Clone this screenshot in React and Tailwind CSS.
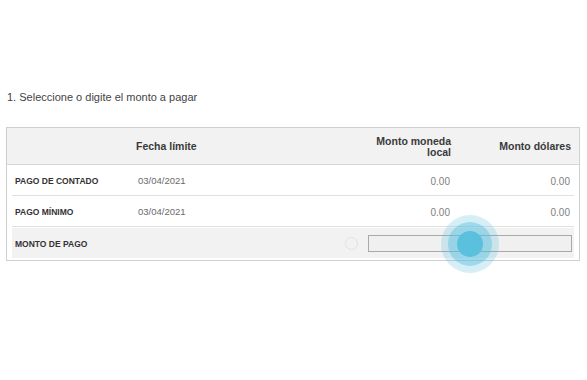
export default function App() {
  const rows = [
    { label: "PAGO DE CONTADO", date: "03/04/2021", local: "0.00", usd: "0.00" },
    { label: "PAGO MÍNIMO", date: "03/04/2021", local: "0.00", usd: "0.00" },
  ];
  return (
    <div className="w-[587px] h-[380px] bg-white font-['Liberation_Sans',Arial,sans-serif] text-[#333] relative">
      <div className="pt-[89px] pl-[7px] text-[11px] leading-[16px] text-[#444]">
        1. Seleccione o digite el monto a pagar
      </div>
      <div className="mt-[22px] ml-[6px] w-[574px] border border-[#cfcfcf]">
        <div className="flex items-center h-[37px] pt-[1px] bg-[#f2f2f2] border-b border-[#d6d6d6] text-[10.5px] font-bold text-[#3a3a3a] leading-[11px]">
          <div className="w-[129px]" />
          <div className="flex-1">Fecha límite</div>
          <div className="w-[150px] pr-[4px] text-right">
            Monto moneda
            <br />
            local
          </div>
          <div className="w-[124px] pr-[8px] text-right">Monto dólares</div>
        </div>
        <div className="px-[5px] pb-[2px]">
          {rows.map((r) => (
            <div
              key={r.label}
              className="flex items-center h-[31px] pt-[3px] border-b border-[#e0e0e0]"
            >
              <div className="w-[126px] pl-[3px] text-[8.5px] font-bold text-[#333]">
                {r.label}
              </div>
              <div className="flex-1 text-[9.5px] text-[#6a6a6a]">{r.date}</div>
              <div className="w-[150px] pr-[4px] text-right text-[10px] text-[#808080]">
                {r.local}
              </div>
              <div className="w-[120px] pr-[4px] text-right text-[10px] text-[#808080]">
                {r.usd}
              </div>
            </div>
          ))}
          <div className="flex items-center h-[30px] mt-[1px] pt-[1px] bg-[#f2f2f2]">
            <div className="flex-1 pl-[3px] pt-[2px] text-[8.5px] font-bold text-[#333]">
              MONTO DE PAGO
            </div>
            <div className="w-[13px] h-[13px] rounded-full border border-[#e2e2e2] mr-[10px]" />
            <div className="w-[204px] h-[17px] border border-[#a9a9a9] bg-[#f0f0f0] mr-[2px]" />
          </div>
        </div>
      </div>
      <div className="absolute left-[441px] top-[215px] w-[58px] h-[58px] rounded-full bg-[#5bc0de]/25 flex items-center justify-center">
        <div className="w-[44px] h-[44px] rounded-full bg-[#5bc0de]/45 flex items-center justify-center">
          <div className="w-[26px] h-[26px] rounded-full bg-[#5bc0de]" />
        </div>
      </div>
    </div>
  );
}
